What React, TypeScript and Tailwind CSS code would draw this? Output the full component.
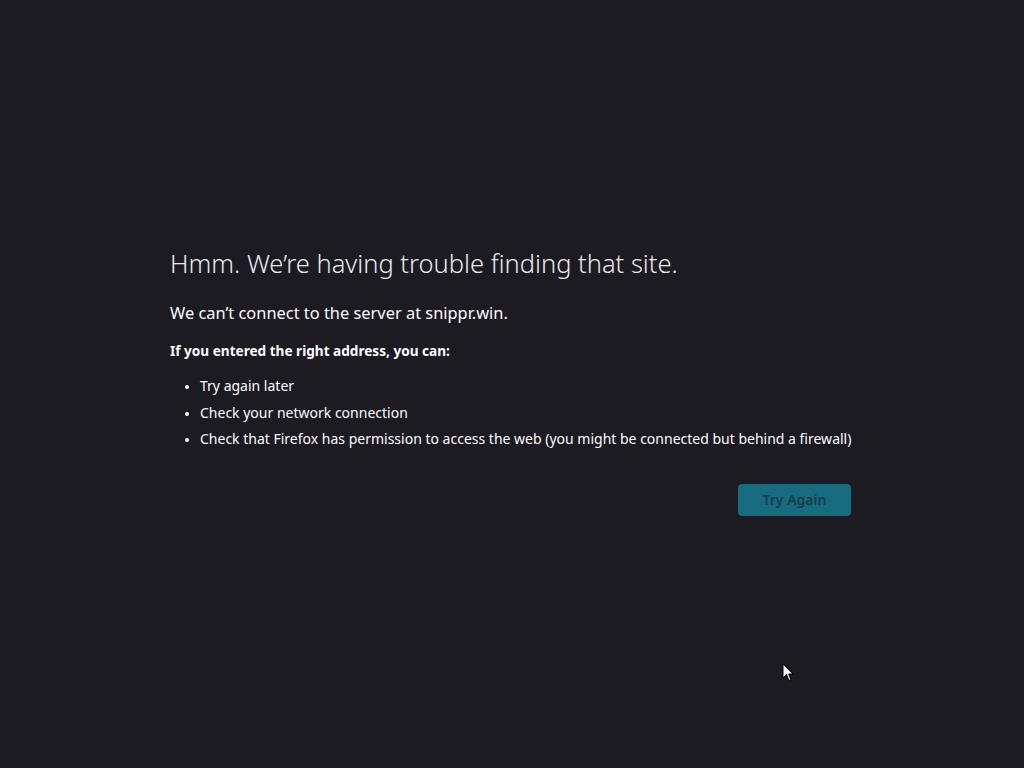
import React from 'react';

const items = [
  'Try again later',
  'Check your network connection',
  'Check that Firefox has permission to access the web (you might be connected but behind a firewall)',
];

const App: React.FC = () => {
  return (
    <main
      className="relative min-h-screen w-full bg-[#1c1b22] text-[#fbfbfe] pt-[246px] pl-[170px]"
      style={{ fontFamily: '"Noto Sans", "Open Sans", sans-serif' }}
    >
      <div className="w-[681px] flex flex-col">
        <h1 className="text-[25.5px] font-light leading-[34px] text-[#e8e8ec]">
          Hmm. We’re having trouble finding that site.
        </h1>
        <p className="mt-[22px] text-[16.4px] leading-[22px]">
          We can’t connect to the server at snippr.win.
        </p>
        <p className="mt-[16px] text-[13.6px] font-bold leading-[22px]">
          If you entered the right address, you can:
        </p>
        <ul className="mt-[11px] pl-[30px] text-[14px] leading-[26.5px] list-disc marker:text-[12px] whitespace-nowrap">
          {items.map((t) => (
            <li key={t}>{t}</li>
          ))}
        </ul>
        <div className="mt-[31px] flex justify-end">
          <button className="h-[32px] w-[113px] rounded-[4px] bg-[#166b7f] text-[14px] font-semibold text-[#1c3b47]">
            Try Again
          </button>
        </div>
      </div>

      {/* mouse pointer */}
      <svg className="absolute left-[782px] top-[663px]" width="12" height="20" viewBox="0 0 12 20">
        <path d="M1 1 L1 15 L4.5 11.5 L7 17.5 L9 16.6 L6.6 11 L11 11 Z" fill="#fff" stroke="#000" strokeWidth="1" />
      </svg>
    </main>
  );
};

export default App;
